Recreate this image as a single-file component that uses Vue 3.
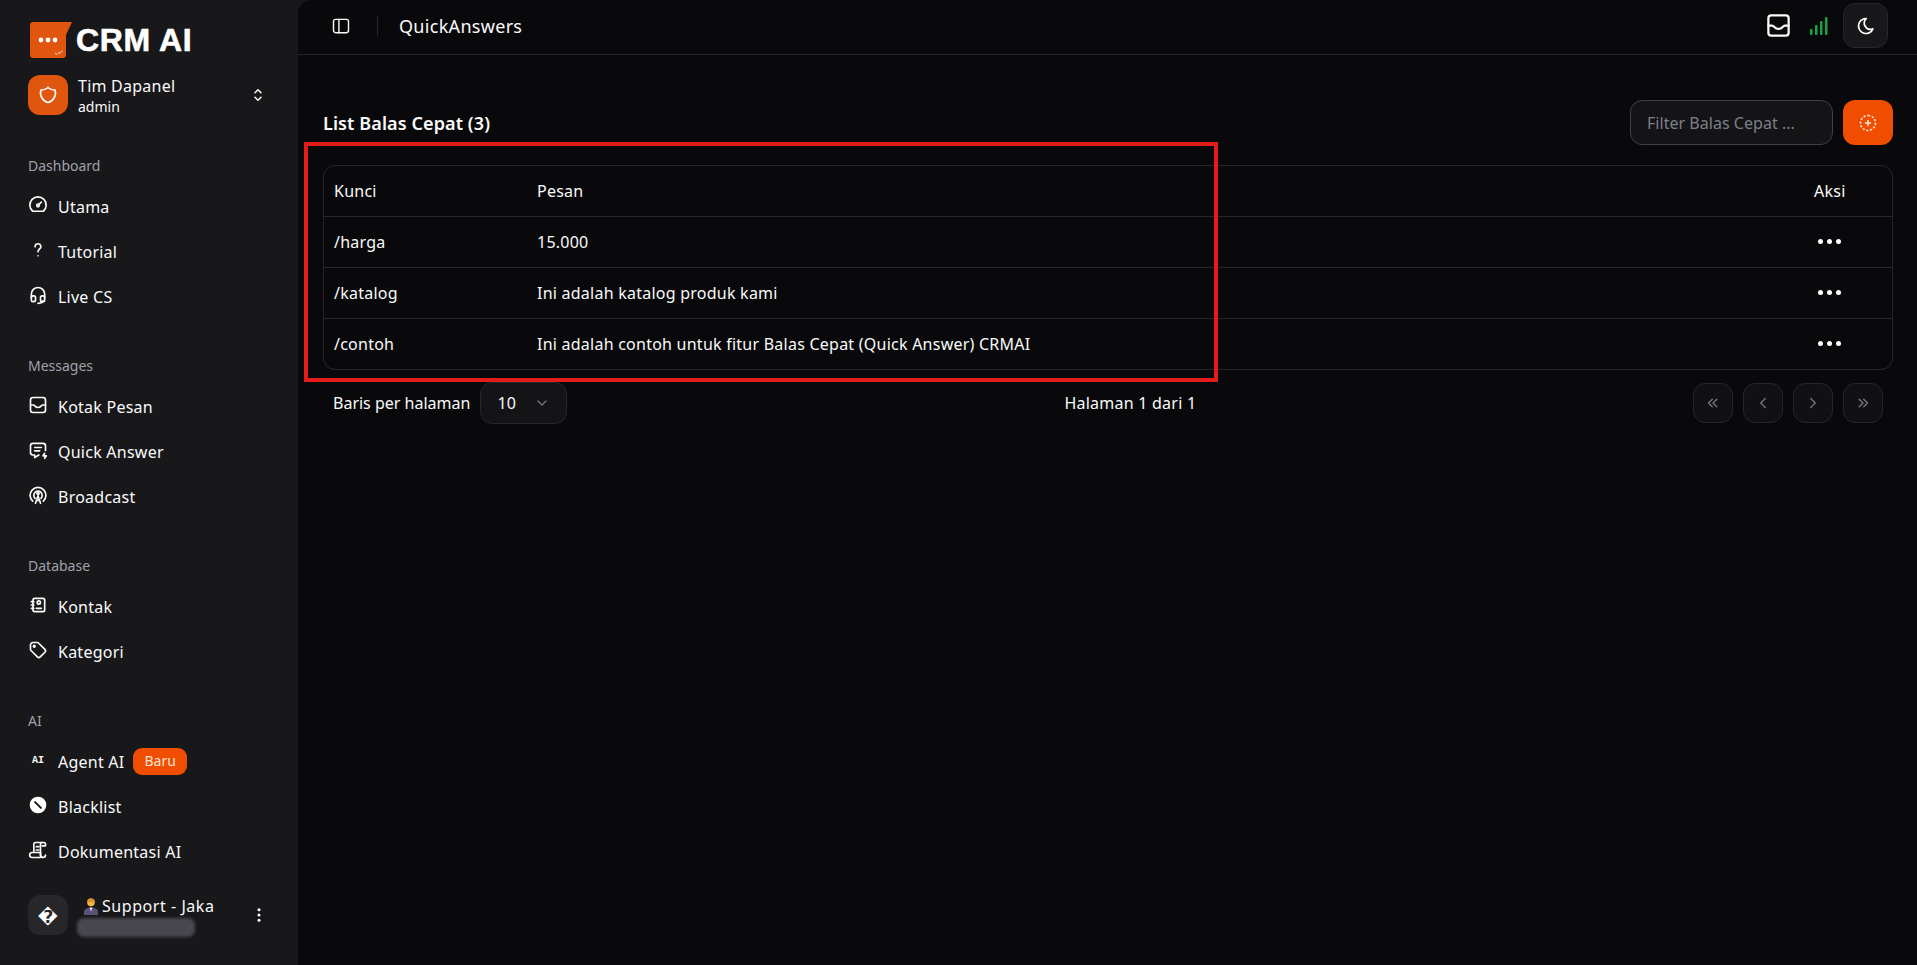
<template>
  <div class="shell">
    <aside class="sidebar">
      <div class="brand">
        <svg class="brand-logo" viewBox="0 0 42 36" width="42" height="36">
          <path d="M3 0H42L36 13V33a3 3 0 0 1-3 3H3a3 3 0 0 1-3-3V3a3 3 0 0 1 3-3z" fill="#e0560f" />
          <circle cx="11" cy="18" r="2.4" fill="#fff" />
          <circle cx="18" cy="18" r="2.4" fill="#fff" />
          <circle cx="25" cy="18" r="2.4" fill="#fff" />
          <path d="M25 31l2 1.5 3-3M29 32l4-3.5" fill="none" stroke="#f6c9ad" stroke-width="1" />
        </svg>
        <span class="brand-name">CRM AI</span>
      </div>

      <div class="team">
        <div class="team-avatar">
          <svg viewBox="0 0 24 24" width="20" height="20" class="ico">
            <path d="M12 3a12 12 0 0 0 8.5 3a12 12 0 0 1-8.5 15a12 12 0 0 1-8.5-15a12 12 0 0 0 8.5-3" />
          </svg>
        </div>
        <div class="team-text">
          <div class="team-name">Tim Dapanel</div>
          <div class="team-role">admin</div>
        </div>
        <svg viewBox="0 0 24 24" width="18" height="18" class="ico team-chevron">
          <path d="M8 9l4-4 4 4" />
          <path d="M16 15l-4 4-4-4" />
        </svg>
      </div>

      <nav class="nav">
        <section v-for="group in menu" :key="group.label" class="nav-group">
          <div class="nav-label">{{ group.label }}</div>
          <a v-for="item in group.items" :key="item.name" class="nav-item">
            <span v-if="item.text" class="nav-ai">AI</span>
            <svg v-else-if="item.solid" viewBox="0 0 24 24" width="20" height="20" class="nav-icon">
              <circle cx="12" cy="12" r="10" fill="#fff" />
              <path d="M8.5 8.5l7 7" stroke="#18181b" stroke-width="2.4" stroke-linecap="round" />
            </svg>
            <svg v-else viewBox="0 0 24 24" width="20" height="20" class="ico nav-icon">
              <path v-for="d in item.paths" :key="d" :d="d" />
            </svg>
            <span>{{ item.name }}</span>
            <span v-if="item.badge" class="badge">{{ item.badge }}</span>
          </a>
        </section>
      </nav>

      <div class="account">
        <div class="account-avatar">&#xFFFD;</div>
        <div class="account-text">
          <div class="account-name">
            <svg viewBox="0 0 16 18" width="16" height="18" class="person">
              <path d="M1 18v-3c0-3 3-4.5 7-4.5s7 1.500 7 4.500v3z" fill="#5b5278" />
              <path d="M6.500 10.500h3l-1.500 4z" fill="#e9e5f0" />
              <circle cx="8" cy="5.500" r="3.800" fill="#f5b942" />
              <path d="M4.200 5a3.800 3.800 0 0 1 7.600 0c-2 .500-5 .500-7.600 0z" fill="#e0932a" />
            </svg>
            Support - Jaka
          </div>
          <div class="account-blur"></div>
        </div>
        <svg viewBox="0 0 24 24" width="18" height="18" class="account-more">
          <circle cx="12" cy="5" r="2" fill="#fff" />
          <circle cx="12" cy="12" r="2" fill="#fff" />
          <circle cx="12" cy="19" r="2" fill="#fff" />
        </svg>
      </div>
    </aside>

    <main class="main">
      <header class="topbar">
        <svg viewBox="0 0 24 24" width="20" height="20" class="ico topbar-toggle">
          <rect x="3" y="4" width="18" height="16" rx="2.500" />
          <path d="M9.500 4v16" />
        </svg>
        <span class="topbar-sep"></span>
        <span class="topbar-title">QuickAnswers</span>
        <div class="topbar-right">
          <svg viewBox="0 0 24 24" width="27" height="27" class="ico inbox">
            <rect x="3" y="3" width="18" height="18" rx="2.500" />
            <path d="M3 12h3.500c1.500 0 2 3 5.500 3s4-3 5.500-3H21" />
          </svg>
          <svg viewBox="0 0 18 18" width="18" height="18" class="signal">
            <rect x="0" y="12" width="2.500" height="6" rx="0.800" />
            <rect x="5" y="8" width="2.500" height="10" rx="0.800" />
            <rect x="10" y="4" width="2.500" height="14" rx="0.800" />
            <rect x="15" y="0" width="2.500" height="18" rx="0.800" />
          </svg>
          <button class="theme-btn">
            <svg viewBox="0 0 24 24" width="20" height="20" class="ico">
              <path d="M12 3c.132 0 .263 0 .393 0a7.500 7.500 0 0 0 7.920 12.446a9 9 0 1 1-8.313-12.454z" />
            </svg>
          </button>
        </div>
      </header>

      <div class="content">
        <div class="toolbar">
          <h2 class="title">List Balas Cepat (3)</h2>
          <div class="toolbar-right">
            <input class="filter" type="text" placeholder="Filter Balas Cepat ..." />
            <button class="add-btn">
              <svg viewBox="0 0 24 24" width="20" height="20" class="ico">
                <path d="M12 3a9 9 0 0 1 9 9a9 9 0 0 1-9 9a9 9 0 0 1-9-9a9 9 0 0 1 9-9" stroke-dasharray="2.600 2" stroke-linecap="butt" />
                <path d="M9 12h6M12 9v6" />
              </svg>
            </button>
          </div>
        </div>

        <div class="table-wrap">
          <table class="table">
            <thead>
              <tr>
                <th class="col-key">Kunci</th>
                <th>Pesan</th>
                <th class="col-action">Aksi</th>
              </tr>
            </thead>
            <tbody>
              <tr v-for="row in rows" :key="row.key">
                <td>{{ row.key }}</td>
                <td>{{ row.message }}</td>
                <td>
                  <span class="dots"><i></i><i></i><i></i></span>
                </td>
              </tr>
            </tbody>
          </table>
        </div>

        <div class="pager">
          <div class="pager-size">
            <span class="pager-label">Baris per halaman</span>
            <div class="select">
              <span>10</span>
              <svg viewBox="0 0 24 24" width="16" height="16" class="ico select-chevron">
                <path d="M6 9l6 6 6-6" />
              </svg>
            </div>
          </div>
          <div class="pager-info">Halaman 1 dari 1</div>
          <div class="pager-buttons">
            <button v-for="(btn, i) in pagerIcons" :key="i" class="pager-btn">
              <svg viewBox="0 0 24 24" width="18" height="18" class="ico">
                <path v-for="d in btn" :key="d" :d="d" />
              </svg>
            </button>
          </div>
        </div>

        <div class="annotation"></div>
      </div>
    </main>
  </div>
</template>

<script setup>
const menu = [
  {
    label: "Dashboard",
    items: [
      {
        name: "Utama",
        paths: [
          "M5.600 19.500a9.800 9.800 0 1 1 12.800 0z",
          "M12 14a1.500 1.500 0 1 0 0-3a1.500 1.500 0 0 0 0 3z",
          "M13.200 11.300l2.800-2.800",
        ],
      },
      { name: "Tutorial", paths: ["M8.500 8a3.500 3.500 0 0 1 7 0c0 2.500-3.500 3-3.500 6", "M12 19v.01"] },
      {
        name: "Live CS",
        paths: [
          "M4 15v-4a8 8 0 1 1 16 0v4",
          "M18 19c0 1.657-2.686 3-6 3",
          "M4 15a2 2 0 0 1 2-2h1a2 2 0 0 1 2 2v3a2 2 0 0 1-2 2h-1a2 2 0 0 1-2-2z",
          "M15 15a2 2 0 0 1 2-2h1a2 2 0 0 1 2 2v3a2 2 0 0 1-2 2h-1a2 2 0 0 1-2-2z",
        ],
      },
    ],
  },
  {
    label: "Messages",
    items: [
      {
        name: "Kotak Pesan",
        paths: [
          "M6 3h12a3 3 0 0 1 3 3v12a3 3 0 0 1-3 3h-12a3 3 0 0 1-3-3v-12a3 3 0 0 1 3-3z",
          "M3 12h3.500c1.500 0 2 3 5.500 3s4-3 5.500-3H21",
        ],
      },
      {
        name: "Quick Answer",
        paths: [
          "M8 9h8",
          "M8 13h6",
          "M13 18l-5 3v-3h-2a3 3 0 0 1-3-3v-8a3 3 0 0 1 3-3h12a3 3 0 0 1 3 3v5.500",
          "M20 16l-2 3h4l-2 3",
        ],
      },
      {
        name: "Broadcast",
        paths: [
          "M18.400 19.400a9.500 9.500 0 1 0-12.800 0",
          "M15.500 16a5 5 0 1 0-7 0",
          "M12 11.500a1.200 1.200 0 1 0 0-2.400a1.200 1.200 0 0 0 0 2.400z",
          "M9 22l3-9 3 9",
          "M10.500 18.500h3",
        ],
      },
    ],
  },
  {
    label: "Database",
    items: [
      {
        name: "Kontak",
        paths: [
          "M20 6v12a2 2 0 0 1-2 2h-10a2 2 0 0 1-2-2v-12a2 2 0 0 1 2-2h10a2 2 0 0 1 2 2z",
          "M10 16h6",
          "M13 11a2 2 0 1 0 0-4a2 2 0 0 0 0 4z",
          "M4 8h3",
          "M4 12h3",
          "M4 16h3",
        ],
      },
      {
        name: "Kategori",
        paths: [
          "M7.500 8.500a1 1 0 1 0 0-2a1 1 0 0 0 0 2z",
          "M3 6v5.172a2 2 0 0 0 .586 1.414l7.710 7.710a2.410 2.410 0 0 0 3.408 0l5.592-5.592a2.410 2.410 0 0 0 0-3.408l-7.710-7.710a2 2 0 0 0-1.414-.586h-5.172a3 3 0 0 0-3 3z",
        ],
      },
    ],
  },
  {
    label: "AI",
    items: [
      { name: "Agent AI", text: true, badge: "Baru" },
      { name: "Blacklist", solid: true },
      {
        name: "Dokumentasi AI",
        paths: [
          "M15 21h-10a3 3 0 0 1 0-6h10v3a3 3 0 0 0 3 3a3 3 0 0 0 3-3v-0",
          "M18 21a3 3 0 0 1-3-3v-13a2 2 0 0 1 2-2",
          "M7 15v-10a2 2 0 0 1 2-2h10a2 2 0 0 1 2 2v2h-4",
          "M10 8h3",
          "M10 12h3",
        ],
      },
    ],
  },
];

const rows = [
  { key: "/harga", message: "15.000" },
  { key: "/katalog", message: "Ini adalah katalog produk kami" },
  { key: "/contoh", message: "Ini adalah contoh untuk fitur Balas Cepat (Quick Answer) CRMAI" },
];

const pagerIcons = [
  ["M11 7l-5 5 5 5", "M17 7l-5 5 5 5"],
  ["M15 6l-6 6 6 6"],
  ["M9 6l6 6-6 6"],
  ["M7 7l5 5-5 5", "M13 7l5 5-5 5"],
];
</script>

<style scoped>
.shell {
  display: flex;
  height: 965px;
  overflow: hidden;
  background: #18181b;
  color: #fafafa;
  font-family: "Noto Sans", "Open Sans", sans-serif;
  font-size: 16px;
  letter-spacing: 0.24px;
}
.ico {
  fill: none;
  stroke: currentColor;
  stroke-width: 2;
  stroke-linecap: round;
  stroke-linejoin: round;
}

/* sidebar */
.sidebar {
  width: 298px;
  flex-shrink: 0;
  display: flex;
  flex-direction: column;
  padding: 22px 28px 30px;
  box-sizing: border-box;
}
.brand {
  display: flex;
  align-items: center;
  gap: 4px;
  padding-left: 2px;
  height: 36px;
}
.brand-name {
  font-family: "Liberation Sans", Arial, sans-serif;
  font-weight: 700;
  font-size: 32px;
  letter-spacing: 0.6px;
  color: #fff;
  -webkit-text-stroke: 0.6px #fff;
}
.team {
  display: flex;
  align-items: center;
  margin-top: 17px;
  height: 40px;
}
.team-avatar {
  width: 40px;
  height: 40px;
  border-radius: 12px;
  background: #e0560f;
  display: flex;
  align-items: center;
  justify-content: center;
}
.team-text {
  margin-left: 10px;
  flex: 1;
}
.team-name {
  line-height: 21px;
  margin-top: 1px;
}
.team-role {
  font-size: 14px;
  line-height: 19px;
  letter-spacing: 0;
}
.team-chevron {
  margin-right: 3px;
}
.nav {
  margin-top: 41px;
  display: flex;
  flex-direction: column;
}
.nav-group {
  margin-bottom: 37px;
}
.nav-group:last-child {
  margin-bottom: 0;
}
.nav-label {
  font-size: 14px;
  line-height: 20px;
  letter-spacing: 0;
  color: #a1a1aa;
  margin-bottom: 8px;
}
.nav-item {
  display: flex;
  align-items: center;
  height: 45px;
}
.nav-icon {
  flex-shrink: 0;
  margin-right: 10px;
  margin-top: -3px;
}
.nav-ai {
  width: 20px;
  margin-right: 10px;
  margin-top: -3px;
  text-align: center;
  font-family: "Liberation Mono", monospace;
  font-size: 10px;
  font-weight: 700;
  letter-spacing: 0;
}
.badge {
  margin-left: 9px;
  padding: 0 11px;
  height: 27px;
  line-height: 26px;
  font-size: 14px;
  letter-spacing: 0;
  border-radius: 9px;
  background: #f04d00;
  color: #fde4d6;
}
.account {
  margin-top: auto;
  display: flex;
  align-items: center;
  height: 40px;
}
.account-avatar {
  width: 40px;
  height: 40px;
  box-sizing: border-box;
  padding-top: 2px;
  border-radius: 12px;
  background: #27272a;
  display: flex;
  align-items: center;
  justify-content: center;
  font-family: "DejaVu Sans", sans-serif;
  font-size: 18px;
  font-weight: 700;
  color: #fff;
}
.account-text {
  margin-left: 9px;
  flex: 1;
}
.account-name {
  display: flex;
  align-items: center;
  gap: 3px;
  margin-top: 2px;
  padding-left: 6px;
  line-height: 22px;
  letter-spacing: 0.55px;
}
.person {
  flex-shrink: 0;
}
.account-blur {
  width: 118px;
  height: 19px;
  margin-top: 1px;
  border-radius: 7px;
  background: #47474d;
  filter: blur(1.500px);
}
.account-more {
  margin-right: 2px;
}

/* main */
.main {
  flex: 1;
  min-width: 0;
  background: #09090b;
  border-top-left-radius: 14px;
  display: flex;
  flex-direction: column;
}
.topbar {
  height: 55px;
  flex-shrink: 0;
  box-sizing: border-box;
  display: flex;
  align-items: center;
  padding: 0 29px 3px 33px;
  border-bottom: 1px solid #27272a;
}
.topbar-toggle {
  stroke-width: 1.700;
}
.topbar-sep {
  width: 1px;
  height: 20px;
  background: #27272a;
  margin: 0 21px 0 26px;
}
.topbar-title {
  font-size: 18px;
  letter-spacing: 0.3px;
}
.topbar-right {
  margin-left: auto;
  display: flex;
  align-items: center;
}
.signal {
  fill: #16a34a;
  margin: 0 15px 0 18px;
}
.theme-btn {
  width: 45px;
  height: 45px;
  border-radius: 12px;
  border: 1px solid #27272a;
  background: #18181b;
  color: #fff;
  display: flex;
  align-items: center;
  justify-content: center;
  padding: 0;
}
.content {
  position: relative;
  flex: 1;
  padding: 45px 24px 0 25px;
}
.toolbar {
  display: flex;
  align-items: center;
  justify-content: space-between;
  height: 45px;
}
.title {
  margin: 0;
  font-size: 18px;
  font-weight: 600;
  letter-spacing: 0.1px;
}
.toolbar-right {
  display: flex;
  gap: 10px;
}
.filter {
  width: 203px;
  height: 45px;
  box-sizing: border-box;
  padding: 0 16px;
  border: 1px solid #3f3f46;
  border-radius: 12px;
  background: #141416;
  color: #fafafa;
  font-family: inherit;
  font-size: 16px;
  letter-spacing: 0.03px;
}
.filter::placeholder {
  color: #7e7f8a;
}
.add-btn {
  width: 50px;
  height: 45px;
  border: 0;
  border-radius: 12px;
  background: #f04d00;
  color: #fde4d6;
  display: flex;
  align-items: center;
  justify-content: center;
  padding: 0;
}
.table-wrap {
  margin-top: 20px;
  border: 1px solid #27272a;
  border-radius: 12px;
  overflow: hidden;
}
.table {
  width: 100%;
  border-collapse: collapse;
}
.table th,
.table td {
  height: 50px;
  padding: 0 10px;
  text-align: left;
  font-weight: 400;
}
.table tr {
  border-bottom: 1px solid #27272a;
}
.table tbody tr:last-child {
  border-bottom: 0;
}
.col-key {
  width: 183px;
}
.col-action {
  width: 68px;
}
.dots {
  display: flex;
  gap: 4px;
  margin-top: -2px;
  padding-left: 4px;
}
.dots i {
  width: 5px;
  height: 5px;
  border-radius: 50%;
  background: #fff;
}
.pager {
  display: flex;
  align-items: center;
  margin-top: 12px;
  padding: 0 10px;
  height: 42px;
}
.pager-size {
  display: flex;
  align-items: center;
  gap: 10px;
}
.pager-label {
  letter-spacing: 0;
}
.select {
  width: 87px;
  height: 42px;
  box-sizing: border-box;
  display: flex;
  align-items: center;
  justify-content: space-between;
  padding: 0 16px;
  border: 1px solid #27272a;
  border-radius: 12px;
  background: #141416;
}
.select-chevron {
  color: #71717a;
}
.pager-info {
  margin-left: 497px;
}
.pager-buttons {
  margin-left: auto;
  display: flex;
  gap: 10px;
}
.pager-btn {
  width: 40px;
  height: 40px;
  border: 1px solid #27272a;
  border-radius: 12px;
  background: #111113;
  color: #71717a;
  display: flex;
  align-items: center;
  justify-content: center;
  padding: 0;
}

/* red box drawn over the screenshot */
.annotation {
  position: absolute;
  left: 6px;
  top: 87px;
  width: 914px;
  height: 240px;
  box-sizing: border-box;
  border: 4px solid #e31c1c;
  pointer-events: none;
}
</style>
